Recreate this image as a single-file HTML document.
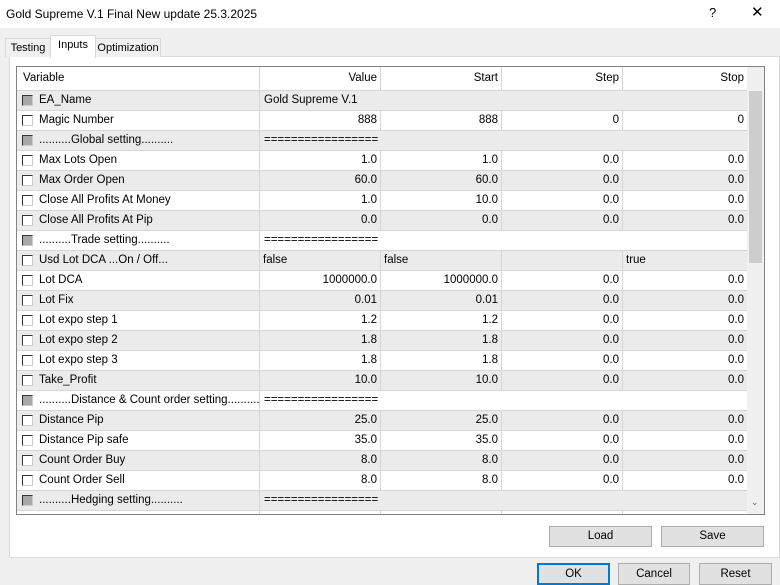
<!DOCTYPE html><html><head><style>
body{margin:0;width:780px;height:585px;background:#f0f0f0;font-family:"Liberation Sans",sans-serif;font-size:11.5px;color:#000;position:relative;overflow:hidden}
.a{position:absolute}
.title{left:0;top:0;width:780px;height:28px;background:#fff}
.tab{position:absolute;border:1px solid #d9d9d9;border-bottom:none;background:#f0f0f0;height:18px;line-height:18px;text-align:center;font-size:11px}
.panel{left:9px;top:56px;width:769px;height:500px;background:#fff;border:1px solid #d9d9d9}
.grid{left:16px;top:66px;width:747px;height:447px;border:1px solid #828282;background:#fff;overflow:hidden}
.row{position:absolute;left:0;width:730px;height:20px;border-bottom:1px solid #d6d6d6;box-sizing:border-box}
.c{position:absolute;top:0;height:19px;line-height:19px;border-right:1px solid #d6d6d6;box-sizing:border-box;padding:0 3px;white-space:nowrap;overflow:hidden}
.r{text-align:right}
.cb{position:absolute;left:5px;top:4px;width:11px;height:11px;border:1px solid #333;border-right-color:#ccc;border-bottom-color:#ccc;box-sizing:border-box;background:#fff}
.cb.g{background:#a8a8a8}
.btn{position:absolute;background:#e1e1e1;border:1px solid #adadad;box-sizing:border-box;text-align:center}
</style></head><body>
<div class="a title"><span class="a" style="left:6px;top:7px;font-size:12px">Gold Supreme V.1 Final New update 25.3.2025</span><span class="a" style="left:709px;top:5px;font-size:13px">?</span><span class="a" style="left:751px;top:3px;font-size:15px">✕</span></div>
<div class="a panel"></div>
<div class="tab" style="left:5px;top:38px;width:44px">Testing</div>
<div class="tab" style="left:50px;top:35px;width:44px;height:22px;background:#fff;z-index:2">Inputs</div>
<div class="tab" style="left:95px;top:38px;width:64px">Optimization</div>
<div class="a grid" id="g">
<div class="row" style="top:0;height:24px;background:#fff">
<div class="c" style="left:0;width:243px;height:23px;line-height:23px;padding-left:6px">Variable</div>
<div class="c r" style="left:243px;width:121px;height:23px;line-height:23px">Value</div>
<div class="c r" style="left:364px;width:121px;height:23px;line-height:23px">Start</div>
<div class="c r" style="left:485px;width:121px;height:23px;line-height:23px">Step</div>
<div class="c r" style="left:606px;width:124px;height:23px;line-height:23px;border:none">Stop</div>
</div>
<div class="a" style="left:730px;top:0;width:17px;height:447px;background:#f0f0f0"><div class="a" style="left:2px;top:24px;width:13px;height:172px;background:#cdcdcd"></div><span class="a" style="left:4px;top:430px;font-size:9px;color:#606060">&#8964;</span></div>
<div id="rows"></div>
</div>
<div class="btn" style="left:549px;top:526px;width:103px;height:21px;line-height:19px">Load</div>
<div class="btn" style="left:661px;top:526px;width:103px;height:21px;line-height:19px">Save</div>
<div class="btn" style="left:537px;top:563px;width:73px;height:22px;line-height:18px;border:2px solid #0078d7">OK</div>
<div class="btn" style="left:618px;top:563px;width:72px;height:22px;line-height:20px">Cancel</div>
<div class="btn" style="left:699px;top:563px;width:73px;height:22px;line-height:20px">Reset</div>
<script>
var d=[["EA_Name",1,"Gold Supreme V.1"],["Magic Number",0,"888","888","0","0"],["..........Global setting..........",1,"================="],["Max Lots Open",0,"1.0","1.0","0.0","0.0"],["Max Order Open",0,"60.0","60.0","0.0","0.0"],["Close All Profits At Money",0,"1.0","10.0","0.0","0.0"],["Close All Profits At Pip",0,"0.0","0.0","0.0","0.0"],["..........Trade setting..........",1,"================="],["Usd Lot DCA ...On / Off...",0,"false","false","","true",1],["Lot DCA",0,"1000000.0","1000000.0","0.0","0.0"],["Lot Fix",0,"0.01","0.01","0.0","0.0"],["Lot expo step 1",0,"1.2","1.2","0.0","0.0"],["Lot expo step 2",0,"1.8","1.8","0.0","0.0"],["Lot expo step 3",0,"1.8","1.8","0.0","0.0"],["Take_Profit",0,"10.0","10.0","0.0","0.0"],["..........Distance & Count order setting..........",1,"================="],["Distance Pip",0,"25.0","25.0","0.0","0.0"],["Distance Pip safe",0,"35.0","35.0","0.0","0.0"],["Count Order Buy",0,"8.0","8.0","0.0","0.0"],["Count Order Sell",0,"8.0","8.0","0.0","0.0"],["..........Hedging setting..........",1,"================="],["",0,"","","",""]];
var h="";d.forEach(function(r,i){var t=24+i*20,bg=i%2==0?"#ebebeb":"#fff";h+='<div class="row" style="top:'+t+'px;background:'+bg+'">';
h+='<div class="c" style="left:0;width:243px;padding-left:22px">'+(r[0]?'<span class="cb'+(r[1]?' g':'')+'"></span>':'')+r[0]+'</div>';
if(r[1]){h+='<div class="c" style="left:243px;width:487px;border:none;padding-left:4px">'+r[2]+'</div>';}
else{var al=r[6]?'':' r';h+='<div class="c'+al+'" style="left:243px;width:121px">'+r[2]+'</div><div class="c'+al+'" style="left:364px;width:121px">'+r[3]+'</div><div class="c'+al+'" style="left:485px;width:121px">'+r[4]+'</div><div class="c'+al+'" style="left:606px;width:124px;border:none">'+r[5]+'</div>';}
h+='</div>';});document.getElementById('rows').innerHTML=h;
</script>
</body></html>
